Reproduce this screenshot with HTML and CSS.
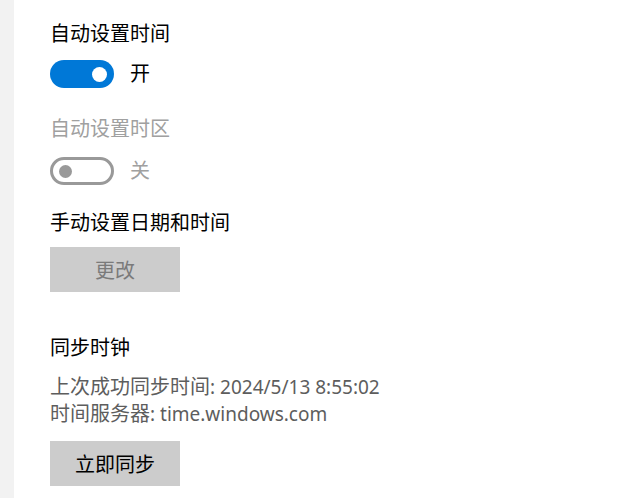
FILE: index.html
```html
<!DOCTYPE html>
<html lang="zh-CN">
<head>
    <meta charset="UTF-8">
    <meta name="viewport" content="width=device-width, initial-scale=1.0">
    <title>日期和时间</title>
    <link rel="stylesheet" href="styles.css">
</head>
<body>
    <!-- Left navigation edge -->
    <div class="navEdge"></div>

    <div class="settings">
        <!-- Auto time -->
        <div class="heading h-first">自动设置时间</div>
        <div class="toggleRow t-first">
            <span class="toggle on"><span class="knob"></span></span>
            <span class="toggleLabel">开</span>
        </div>

        <!-- Auto time zone (disabled) -->
        <div class="heading disabled h-zone">自动设置时区</div>
        <div class="toggleRow t-zone">
            <span class="toggle off"><span class="knob"></span></span>
            <span class="toggleLabel disabled">关</span>
        </div>

        <!-- Manual date and time -->
        <div class="heading h-manual">手动设置日期和时间</div>
        <button class="btn b-change" disabled>更改</button>

        <!-- Sync clock -->
        <div class="heading h-sync">同步时钟</div>
        <div class="info">
            <div class="infoLine">上次成功同步时间<span class="latin">: 2024/5/13 8:55:02</span></div>
            <div class="infoLine">时间服务器<span class="latin">: time.windows.com</span></div>
        </div>
        <button class="btn b-sync">立即同步</button>
    </div>
</body>
</html>
```

FILE: styles.css
```css
body {
    margin: 0;
    padding: 0;
    display: flex;
    height: 100vh;
    background-color: #ffffff;
    color: #000000;
    font-family: "Segoe UI", "Noto Sans", "Noto Sans CJK SC", sans-serif;
    overflow: hidden;
}

.navEdge {
    width: 14px;
    flex-shrink: 0;
    background-color: #f2f2f2;
}

.settings {
    display: flex;
    flex-direction: column;
    align-items: flex-start;
    padding: 20px 0 0 36px;
}

.heading {
    font-size: 20px;
    line-height: 28px;
}

.disabled {
    color: #a0a0a0;
}

/* Toggle switch */
.toggleRow {
    display: flex;
    align-items: center;
    gap: 16px;
    height: 28px;
}

.toggle {
    box-sizing: border-box;
    width: 64px;
    height: 28px;
    border-radius: 14px;
    display: flex;
    align-items: center;
}

.toggle.on {
    background-color: #0078d7;
    justify-content: flex-end;
    padding-right: 7px;
}

.toggle.on .knob {
    width: 15px;
    height: 15px;
    border-radius: 50%;
    background-color: #ffffff;
}

.toggle.off {
    border: 3px solid #999999;
    padding-left: 6px;
}

.toggle.off .knob {
    width: 13px;
    height: 13px;
    border-radius: 50%;
    background-color: #999999;
}

.toggleLabel {
    font-size: 20px;
    line-height: 28px;
}

/* Buttons */
.btn {
    width: 130px;
    height: 45px;
    border: none;
    background-color: #cccccc;
    color: #000000;
    font-family: inherit;
    font-size: 20px;
    padding: 0;
}

.btn:disabled {
    color: #7a7a7a;
}

.info {
    font-size: 20px;
    line-height: 27px;
    color: #5d5d5d;
}

.infoLine {
    height: 27px;
}

/* Segoe UI runs narrower than Noto Sans */
.latin {
    font-size: 19px;
}

/* Vertical rhythm */
.t-first { margin-top: 12px; }
.h-zone { margin-top: 27px; }
.t-zone { margin-top: 14px; }
.h-manual { margin-top: 24px; }
.b-change { margin-top: 10px; }
.h-sync { margin-top: 42px; }
.info { margin-top: 11px; }
.b-sync { margin-top: 14px; }
```
